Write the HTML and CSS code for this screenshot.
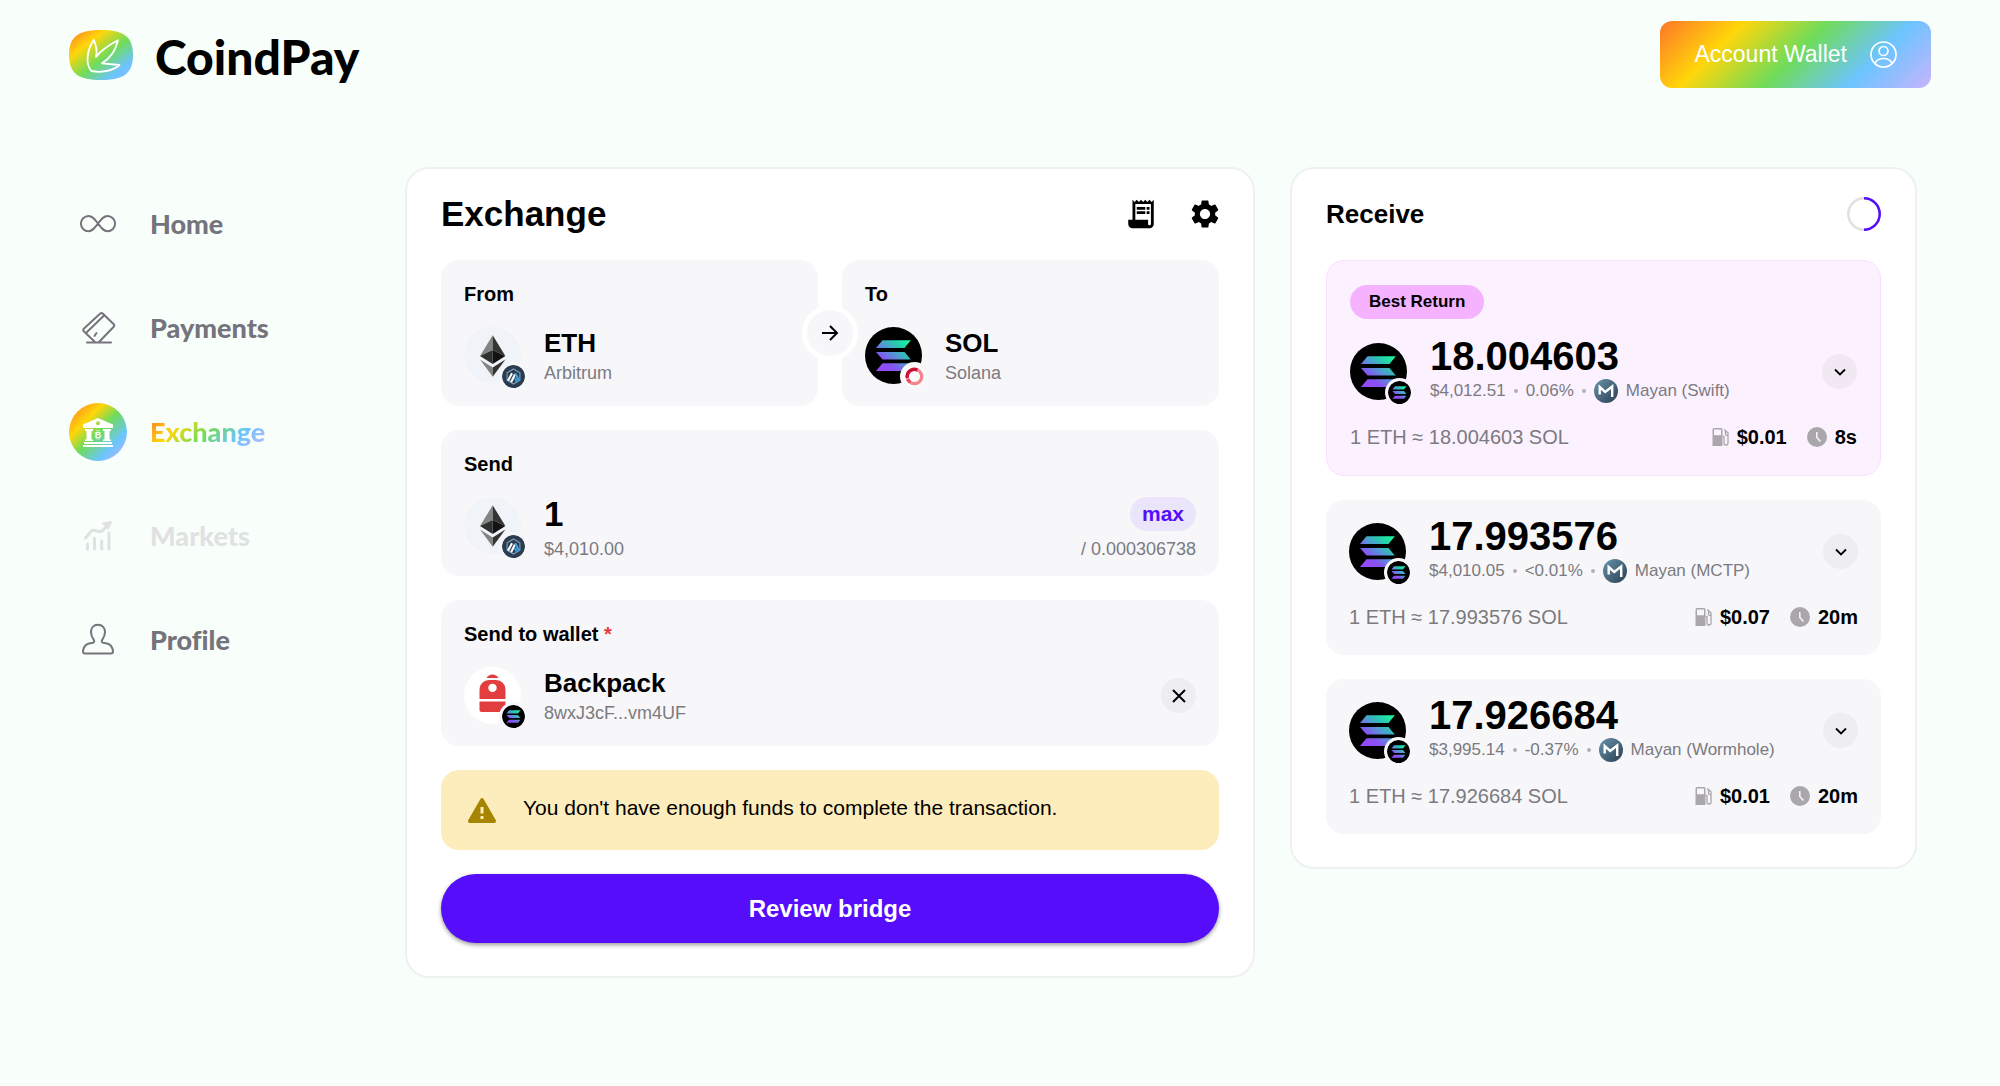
FILE: index.html
```html
<!DOCTYPE html>
<html lang="en">

<head>
	<meta charset="UTF-8">
	<title>CoindPay - Exchange</title>
	<link rel="stylesheet" href="styles.css">
</head>

<body>
	<!-- shared icons -->
	<svg class="sprite" aria-hidden="true">
		<defs>
			<linearGradient id="rainbow" x1="0" y1="0" x2="1" y2="1">
				<stop offset="0" stop-color="#ff7628" />
				<stop offset="0.28" stop-color="#ffd60a" />
				<stop offset="0.55" stop-color="#70dc5a" />
				<stop offset="0.8" stop-color="#6cc4ff" />
				<stop offset="1" stop-color="#8fb8ff" />
			</linearGradient>
			<linearGradient id="solGrad" gradientUnits="userSpaceOnUse" x1="14" y1="46" x2="42" y2="12">
				<stop offset="0" stop-color="#9945ff" />
				<stop offset="0.3" stop-color="#8752f3" />
				<stop offset="0.55" stop-color="#5497d5" />
				<stop offset="0.75" stop-color="#28c9b0" />
				<stop offset="1" stop-color="#19fb9b" />
			</linearGradient>
			<linearGradient id="mayanGrad" x1="0" y1="0" x2="1" y2="1">
				<stop offset="0" stop-color="#6795ad" />
				<stop offset="1" stop-color="#2c3d50" />
			</linearGradient>
		</defs>
		<symbol id="sol" viewBox="0 0 57 57">
			<circle cx="28.500" cy="28.500" r="28.500" fill="#000" />
			<path fill="url(#solGrad)" d="M11 21l6.500-7.700h28.300L39.500 21zM11 25h28.500l6.300 7.500H17.500zM11 44l6.500-7.700h28.300L39.500 44z" />
		</symbol>
		<symbol id="eth" viewBox="0 0 57 57">
			<circle cx="28.500" cy="28.500" r="28.500" fill="#f0f4f8" />
			<path fill="#828384" d="M28.700 8.300L16 29l12.700-6z" />
			<path fill="#343434" d="M28.700 8.300L41.400 29l-12.700-6z" />
			<path fill="#2f3030" d="M28.700 23L16 29l12.700 8z" />
			<path fill="#131313" d="M28.700 23l12.700 6-12.700 8z" />
			<path fill="#828384" d="M16 32.500l12.700 8v9.300z" />
			<path fill="#343434" d="M41.400 32.500l-12.700 8v9.300z" />
		</symbol>
		<symbol id="arb" viewBox="0 0 24 24">
			<circle cx="12" cy="12" r="12" fill="#2b3b50" />
			<path fill="none" stroke="#7d9db8" stroke-width="1.200" d="M12 4.200l6.700 3.900v7.800L12 19.800l-6.700-3.900V8.100z" />
			<path stroke="#fff" stroke-width="2.200" d="M6.300 16.500l4.200-8M9.500 18l4-8" />
			<path stroke="#3ba2e8" stroke-width="2.200" d="M13.800 8.500l3.800 7.500M13.500 13.500l2 4" />
		</symbol>
		<symbol id="mayan" viewBox="0 0 24 24">
			<circle cx="12" cy="12" r="12" fill="url(#mayanGrad)" />
			<path fill="none" stroke="#fff" stroke-width="2.400" d="M5.700 15.500V8l5.500 5 7-5.500V18" />
		</symbol>
		<symbol id="chevron" viewBox="0 0 12 8">
			<path fill="none" stroke="#000" stroke-width="1.800" d="M1 1.500l5 5 5-5" />
		</symbol>
		<symbol id="gas" viewBox="0 0 17 18">
			<path fill="#aaa7ac" fill-rule="evenodd" d="M2 0h7a1.500 1.500 0 0 1 1.500 1.500V18h-10V1.500A1.500 1.500 0 0 1 2 0zm0 1.500v5.700h7V1.500z" />
			<path fill="none" stroke="#aaa7ac" stroke-width="1.300" d="M10.500 8.500h1.500v6.500a2 2 0 0 0 4 0V4.800L12.300 1.500M13.500 3v3a1.500 1.500 0 0 0 2.500 1" />
		</symbol>
		<symbol id="clock" viewBox="0 0 20 20">
			<circle cx="10" cy="10" r="10" fill="#aaa7ac" />
			<path fill="none" stroke="#f7f7fa" stroke-width="1.500" d="M9.800 5v5.500l3.600 4" />
		</symbol>
	</svg>

	<header class="header">
		<a class="brand" href="#">
			<svg width="64" height="50" viewBox="0 0 64 50" aria-hidden="true">
				<path fill="url(#rainbow)" d="M32 0C54 0 64 6 64 25S54 50 32 50 0 44 0 25 10 0 32 0z" />
				<path fill="none" stroke="#fff" stroke-width="1.800" stroke-linejoin="round" d="M24.700 10C18 20 16 34 22.500 41c9.500 2 21.500 0 28-6L33 33.300C42 28 47 19 49 10.300 42 14 32 20 27 27c1.500-6 0-12-2.300-17z" />
			</svg>
			<span>CoindPay</span>
		</a>
		<button class="wallet-btn">
			Account Wallet
			<svg width="27" height="27" viewBox="0 0 27 27" fill="none" stroke="#fff" stroke-width="1.700" aria-hidden="true">
				<circle cx="13.500" cy="13.500" r="12.500" />
				<circle cx="13.500" cy="10" r="4.500" />
				<path d="M5 22.500c1.500-3.500 4.500-5 8.500-5s7 1.500 8.500 5" />
			</svg>
		</button>
	</header>

	<div class="layout">
		<nav class="nav">
			<a href="#">
				<svg viewBox="0 0 58 58" aria-hidden="true">
					<path d="M29 28.500C25 23 23 21 19.500 21a7.600 7.600 0 0 0 0 15.200C23 36.200 25 34 29 28.500S35 21 38.500 21a7.600 7.600 0 0 1 0 15.200C35 36.200 33 34 29 28.500z" />
				</svg>
				<span>Home</span>
			</a>
			<a href="#">
				<svg viewBox="0 0 58 58" aria-hidden="true">
					<path d="M18 43.500h24M26 43L15 32.500q-1.500-1.500 0-3L31 14.800q1.500-1.500 3 0L44.500 25q1.500 1.500 0 3L30 43M17.500 33.500L34.500 17M25.500 37l2-3" />
				</svg>
				<span>Payments</span>
			</a>
			<a href="#" class="active" aria-current="page">
				<svg viewBox="0 0 58 58" aria-hidden="true">
					<path fill="#fff" stroke="none" fill-rule="evenodd" d="M14 21.500L29 15l15 6.500V25H14zM29 18.300a2 2 0 1 0 0 4 2 2 0 0 0 0-4zM16 26h8v2h-1.500v8.500H24v1.500h-8v-1.500h1.500V28H16zM34 26h8v2h-1.500v8.500H42v1.500h-8v-1.500h1.500V28H34zM15 39h28v2H15zM14 42h30v2H14z" />
					<path stroke="#fff" stroke-width="1" d="M28 27.500v.5M30 27.500v.5M28 35.500v.5M30 35.500v.5" />
					<text x="29" y="35" text-anchor="middle" class="coin-letter">B</text>
				</svg>
				<span>Exchange</span>
			</a>
			<a href="#" class="disabled" aria-disabled="true">
				<svg viewBox="0 0 58 58" aria-hidden="true">
					<path class="thick" d="M16.500 31l5-6q2-2.500 4.500-1.500l4 1q2 .5 3.500-1L39 18M18.500 37v5M25.500 31v11M32.700 34v8M40 26v16" />
					<path fill="#e0e2e1" d="M34 16.500l8-1.500-3 6.500z" />
				</svg>
				<span>Markets</span>
			</a>
			<a href="#">
				<svg viewBox="0 0 58 58" aria-hidden="true">
					<path d="M29 13.700c-4.500 0-7 3.200-7 7.300 0 4 1.500 6 3 8.200.5 1 .3 2.300-1 2.600l-4 .6c-4 .9-5.500 4-6 7.600 0 1.600.7 2.500 2 2.500h26c1.300 0 2-.9 2-2.500-.5-3.600-2-6.700-6-7.600l-4-.6c-1.300-.3-1.500-1.600-1-2.600 1.500-2.200 3-4.200 3-8.200 0-4.100-2.500-7.300-7-7.300z" />
				</svg>
				<span>Profile</span>
			</a>
		</nav>

		<main class="cards">
			<section class="card">
				<div class="card-head">
					<h1>Exchange</h1>
					<div class="tools">
						<button class="icon-btn" aria-label="History">
							<svg width="34" height="34" viewBox="0 0 24 24" aria-hidden="true">
								<path d="M19.500 3.500L18 2l-1.500 1.500L15 2l-1.500 1.500L12 2l-1.500 1.500L9 2 7.500 3.500 6 2v14H3v3c0 1.660 1.340 3 3 3h12c1.660 0 3-1.340 3-3V2l-1.500 1.500zM19 19c0 .55-.45 1-1 1s-1-.45-1-1v-3H8V5h11v14z" />
								<path d="M9 7h6v2H9zM16 7h2v2h-2zM9 10h6v2H9zM16 10h2v2h-2z" />
							</svg>
						</button>
						<button class="icon-btn" aria-label="Settings">
							<svg width="34" height="34" viewBox="0 0 24 24" aria-hidden="true">
								<path d="M19.140 12.940c.04-.3.060-.61.060-.94 0-.32-.02-.64-.07-.94l2.030-1.580c.18-.14.23-.41.120-.61l-1.920-3.320c-.12-.22-.37-.29-.59-.22l-2.390.96c-.5-.38-1.030-.7-1.620-.94l-.36-2.540c-.04-.24-.24-.41-.48-.41h-3.840c-.24 0-.43.17-.47.41l-.36 2.540c-.59.24-1.130.57-1.620.94l-2.390-.96c-.22-.08-.47 0-.59.22L2.740 8.870c-.12.21-.08.47.120.61l2.030 1.580c-.05.3-.09.63-.09.94s.02.64.070.94l-2.030 1.580c-.18.14-.23.41-.12.61l1.920 3.320c.12.22.37.29.59.22l2.390-.96c.5.38 1.030.7 1.620.94l.36 2.540c.05.24.24.41.48.41h3.840c.24 0 .44-.17.47-.41l.36-2.540c.59-.24 1.130-.56 1.620-.94l2.390.96c.22.080.47 0 .59-.22l1.920-3.320c.12-.22.070-.47-.12-.61l-2.010-1.580zM12 15.600c-1.980 0-3.600-1.620-3.600-3.600s1.620-3.600 3.600-3.600 3.600 1.620 3.600 3.600-1.620 3.600-3.600 3.600z" />
							</svg>
						</button>
					</div>
				</div>

				<div class="pair">
					<button class="panel">
						<span class="label">From</span>
						<span class="row">
							<span class="token">
								<svg class="coin" aria-hidden="true"><use href="#eth" /></svg>
								<svg class="badge" aria-hidden="true"><use href="#arb" /></svg>
							</span>
							<span class="info">
								<span class="name">ETH</span>
								<span class="sub">Arbitrum</span>
							</span>
						</span>
					</button>
					<button class="panel">
						<span class="label">To</span>
						<span class="row">
							<span class="token">
								<svg class="coin" aria-hidden="true"><use href="#sol" /></svg>
								<svg class="badge" viewBox="0 0 24 24" aria-hidden="true">
									<circle cx="12" cy="12" r="12" fill="#fbfbfd" />
									<g fill="none" stroke-width="3.500">
										<circle cx="12" cy="12" r="7.500" stroke="#f4848e" />
										<path stroke="#cf1035" d="M4.500 13.500A7.500 7.500 0 0 1 15 5.200" />
										<path stroke="#e84a60" d="M5 15a7.500 7.500 0 0 0 2.500 3" />
									</g>
								</svg>
							</span>
							<span class="info">
								<span class="name">SOL</span>
								<span class="sub">Solana</span>
							</span>
						</span>
					</button>
					<button class="swap" aria-label="Swap tokens">
						<svg width="18" height="18" viewBox="0 0 18 18" fill="none" stroke="#000" stroke-width="2" aria-hidden="true">
							<path d="M1 9h15M9 2l7 7-7 7" />
						</svg>
					</button>
				</div>

				<div class="panel">
					<label class="label" for="amount">Send</label>
					<div class="row top">
						<span class="token">
							<svg class="coin" aria-hidden="true"><use href="#eth" /></svg>
							<svg class="badge" aria-hidden="true"><use href="#arb" /></svg>
						</span>
						<div class="info send">
							<input type="text" id="amount" class="amount" value="1">
							<span class="sub">$4,010.00</span>
						</div>
						<div class="info send right">
							<button class="max">max</button>
							<span class="sub">/ 0.000306738</span>
						</div>
					</div>
				</div>

				<div class="panel">
					<span class="label">Send to wallet <span class="required">*</span></span>
					<div class="row">
						<span class="token">
							<svg class="coin" viewBox="0 0 57 57" fill="#e33e3f" aria-hidden="true">
								<circle cx="28.500" cy="28.500" r="28.500" fill="#fff" />
								<path d="M22.500 11q2-3.500 6-3.500t6 3.500z" />
								<path fill-rule="evenodd" d="M15.500 32V22.500a9.500 9.500 0 0 1 9.500-9.500h7a9.500 9.500 0 0 1 9.500 9.500V32zM28.500 16.700a4.200 4.200 0 1 0 0 8.400 4.200 4.200 0 0 0 0-8.400z" />
								<path d="M15.500 34.500h26v8.500a2 2 0 0 1-2 2h-22a2 2 0 0 1-2-2z" />
							</svg>
							<svg class="badge" aria-hidden="true"><use href="#sol" /></svg>
						</span>
						<div class="info">
							<span class="name">Backpack</span>
							<span class="sub">8wxJ3cF...vm4UF</span>
						</div>
						<button class="round" aria-label="Remove wallet">
							<svg width="14" height="14" viewBox="0 0 14 14" stroke="#000" stroke-width="2" aria-hidden="true">
								<path d="M1 1l12 12M13 1L1 13" />
							</svg>
						</button>
					</div>
				</div>

				<div class="warning" role="alert">
					<svg width="28" height="25" viewBox="0 0 28 25" aria-hidden="true">
						<path fill="#a68500" fill-rule="evenodd" d="M12.300 1.200q1.700-2.400 3.400 0l12 20.800q1 3-1.700 3H2q-2.700 0-1.700-3zM12.500 9v6.500h3V9zM12.500 18v3h3v-3z" />
					</svg>
					<span>You don't have enough funds to complete the transaction.</span>
				</div>

				<button class="review">Review bridge</button>
			</section>

			<section class="card">
				<div class="card-head">
					<h2>Receive</h2>
					<svg width="34" height="34" viewBox="0 0 34 34" fill="none" stroke-width="2.500" aria-hidden="true">
						<circle cx="17" cy="17" r="15.700" stroke="#e0e0e1" />
						<path stroke="#560dfa" d="M17 1.300a15.700 15.700 0 0 1 0 31.400" />
					</svg>
				</div>

				<div class="quote best">
					<span class="pill">Best Return</span>
					<div class="row">
						<span class="token">
							<svg class="coin" aria-hidden="true"><use href="#sol" /></svg>
							<svg class="badge" aria-hidden="true"><use href="#sol" /></svg>
						</span>
						<div class="info">
							<span class="total">18.004603</span>
							<span class="sub via">$4,012.51<i class="dot"></i>0.06%<i class="dot"></i><svg class="mayan" aria-hidden="true"><use href="#mayan" /></svg>Mayan (Swift)</span>
						</div>
						<button class="round" aria-label="Show details">
							<svg width="12" height="8" aria-hidden="true"><use href="#chevron" /></svg>
						</button>
					</div>
					<div class="rate">
						<span>1 ETH ≈ 18.004603 SOL</span>
						<b><svg width="17" height="18" aria-hidden="true"><use href="#gas" /></svg>$0.01</b>
						<b><svg width="20" height="20" aria-hidden="true"><use href="#clock" /></svg>8s</b>
					</div>
				</div>

				<div class="quote">
					<div class="row">
						<span class="token">
							<svg class="coin" aria-hidden="true"><use href="#sol" /></svg>
							<svg class="badge" aria-hidden="true"><use href="#sol" /></svg>
						</span>
						<div class="info">
							<span class="total">17.993576</span>
							<span class="sub via">$4,010.05<i class="dot"></i>&lt;0.01%<i class="dot"></i><svg class="mayan" aria-hidden="true"><use href="#mayan" /></svg>Mayan (MCTP)</span>
						</div>
						<button class="round" aria-label="Show details">
							<svg width="12" height="8" aria-hidden="true"><use href="#chevron" /></svg>
						</button>
					</div>
					<div class="rate">
						<span>1 ETH ≈ 17.993576 SOL</span>
						<b><svg width="17" height="18" aria-hidden="true"><use href="#gas" /></svg>$0.07</b>
						<b><svg width="20" height="20" aria-hidden="true"><use href="#clock" /></svg>20m</b>
					</div>
				</div>

				<div class="quote">
					<div class="row">
						<span class="token">
							<svg class="coin" aria-hidden="true"><use href="#sol" /></svg>
							<svg class="badge" aria-hidden="true"><use href="#sol" /></svg>
						</span>
						<div class="info">
							<span class="total">17.926684</span>
							<span class="sub via">$3,995.14<i class="dot"></i>-0.37%<i class="dot"></i><svg class="mayan" aria-hidden="true"><use href="#mayan" /></svg>Mayan (Wormhole)</span>
						</div>
						<button class="round" aria-label="Show details">
							<svg width="12" height="8" aria-hidden="true"><use href="#chevron" /></svg>
						</button>
					</div>
					<div class="rate">
						<span>1 ETH ≈ 17.926684 SOL</span>
						<b><svg width="17" height="18" aria-hidden="true"><use href="#gas" /></svg>$0.01</b>
						<b><svg width="20" height="20" aria-hidden="true"><use href="#clock" /></svg>20m</b>
					</div>
				</div>
			</section>
		</main>
	</div>
</body>

</html>
```
FILE: styles.css
```css
* {
	box-sizing: border-box;
}

body {
	margin: 0;
	font-family: "Liberation Sans", Arial, sans-serif;
	font-size: 20px;
	color: #000;
	background-color: #f8fffb;
}

button {
	font-family: inherit;
	color: inherit;
	border: none;
	padding: 0;
	cursor: pointer;
}

a {
	color: inherit;
	text-decoration: none;
}

svg {
	display: block;
	flex-shrink: 0;
}

.sprite {
	position: absolute;
	width: 0;
	height: 0;
}

/* header */
.header {
	display: flex;
	justify-content: space-between;
	padding: 21px 69px 0;
}

.brand {
	display: flex;
	align-items: center;
	gap: 22px;
	height: 67px;
	font-family: Lato, sans-serif;
	font-weight: 900;
	font-size: 48px;
}

.brand span {
	padding-top: 4px;
}

.wallet-btn {
	display: flex;
	align-items: center;
	gap: 23px;
	height: 67px;
	padding: 0 34px;
	border-radius: 12px;
	font-size: 23px;
	color: #fff;
	background: linear-gradient(135deg, #ff7628, #ffd60a 25%, #70dc5a 50%, #6cc4ff 75%, #c8b4fb);
}

/* side menu */
.layout {
	display: flex;
	padding: 79px 83px 80px 69px;
}

.nav {
	display: flex;
	flex-direction: column;
	flex-shrink: 0;
	gap: 46px;
	width: 336px;
	padding-top: 28px;
	font-family: Lato, sans-serif;
	font-weight: 900;
	font-size: 27px;
	font-variant-ligatures: none;
	line-height: 32px;
	color: #75737c;
}

.nav a {
	display: flex;
	align-items: center;
	gap: 23px;
}

.nav svg {
	width: 58px;
	height: 58px;
	fill: none;
	stroke: #75737c;
	stroke-width: 2;
	stroke-linecap: round;
	stroke-linejoin: round;
}

.nav .active svg {
	border-radius: 50%;
	background: linear-gradient(135deg, #ff7628, #ffd60a 30%, #70dc5a 50%, #6cc4ff 75%, #c8b4fb);
}

.nav .active span {
	color: transparent;
	background: linear-gradient(135deg, #ff7628, #ffd60a 25%, #70dc5a 50%, #6cc4ff 75%, #c8b4fb);
	-webkit-background-clip: text;
	background-clip: text;
}

.coin-letter {
	font-family: "Liberation Sans", Arial, sans-serif;
	font-size: 9px;
	font-weight: bold;
	fill: #fff;
	stroke: none;
}

.nav .disabled {
	color: #e0e2e1;
}

.nav .disabled svg {
	stroke: #e0e2e1;
}

.nav .thick {
	stroke-width: 3;
}

/* cards */
.cards {
	display: grid;
	grid-template-columns: 850fr 627fr;
	align-items: start;
	gap: 35px;
	flex: 1;
}

.card {
	display: flex;
	flex-direction: column;
	gap: 24px;
	padding: 28px 34px 33px;
	border: 2px solid #eff1f0;
	border-radius: 24px;
	background-color: #fff;
}

.card-head {
	display: flex;
	align-items: center;
	justify-content: space-between;
	height: 34px;
	margin-bottom: 5px;
}

h1,
h2 {
	margin: 0;
	font-size: 35px;
}

h2 {
	font-size: 26px;
}

.tools {
	display: flex;
	gap: 30px;
	margin-right: -3px;
}

.icon-btn {
	background: none;
}

.pair {
	position: relative;
	display: grid;
	grid-template-columns: 1fr 1fr;
	gap: 24px;
}

.panel {
	display: flex;
	flex-direction: column;
	gap: 21px;
	min-height: 146px;
	padding: 22px 23px 0;
	border-radius: 18px;
	text-align: left;
	background-color: #f7f7fa;
}

.label {
	font-size: 20px;
	font-weight: bold;
	line-height: 24px;
}

.required {
	color: #e5393f;
}

.swap {
	position: absolute;
	top: 50%;
	left: 50%;
	display: flex;
	align-items: center;
	justify-content: center;
	width: 56px;
	height: 56px;
	border: 5px solid #fff;
	border-radius: 50%;
	background-color: #f7f7fa;
	transform: translate(-50%, -50%);
}

.row {
	display: flex;
	align-items: center;
	gap: 23px;
}

.row.top {
	align-items: flex-start;
}

.token {
	position: relative;
	flex-shrink: 0;
	width: 57px;
	height: 57px;
}

.coin {
	width: 57px;
	height: 57px;
}

.badge {
	position: absolute;
	right: -7px;
	bottom: -7px;
	width: 29px;
	height: 29px;
	border: 3px solid #f7f7fa;
	border-radius: 50%;
	background-color: #f7f7fa;
}

.info {
	display: flex;
	flex-direction: column;
	gap: 5px;
	flex: 1;
}

.name {
	font-size: 26px;
	font-weight: bold;
	line-height: 30px;
}

.sub {
	font-size: 18px;
	line-height: 20px;
	color: #7b7a7f;
}

.send {
	gap: 8px;
}

.right {
	align-items: flex-end;
}

.amount {
	width: 100%;
	height: 34px;
	padding: 0;
	border: none;
	outline: none;
	background: none;
	font-family: inherit;
	font-size: 35px;
	font-weight: bold;
}

.max {
	height: 34px;
	padding: 0 12px;
	border-radius: 17px;
	font-size: 21px;
	font-weight: bold;
	color: #560dfa;
	background-color: #eae5fb;
}

.round {
	display: flex;
	align-items: center;
	justify-content: center;
	flex-shrink: 0;
	width: 35px;
	height: 35px;
	border-radius: 50%;
	background-color: #eeeef0;
}

.warning {
	display: flex;
	align-items: center;
	gap: 27px;
	height: 80px;
	padding: 0 27px;
	border-radius: 18px;
	font-size: 21px;
	background-color: #fdecbc;
}

.warning span {
	padding-bottom: 4px;
}

.review {
	height: 69px;
	border-radius: 35px;
	font-size: 24px;
	font-weight: bold;
	color: #fff;
	background-color: #560dfa;
	box-shadow: 0 2px 4px rgba(0, 0, 0, 0.4);
}

/* quotes */
.quote {
	padding: 20px 23px 26px;
	border-radius: 18px;
	background-color: #f7f7fa;
}

.best {
	padding: 24px 23px 26px;
	border: 1px solid #f8e0fe;
	background-color: #fcf1ff;
}

.best .badge {
	border-color: #fcf1ff;
	background-color: #fcf1ff;
}

.best .round {
	background-color: #f2e8f4;
}

.pill {
	display: inline-block;
	margin-bottom: 21px;
	padding: 0 19px;
	border-radius: 17px;
	font-size: 17px;
	font-weight: bold;
	line-height: 34px;
	vertical-align: top;
	background-color: #f5b3ff;
}

.quote .info {
	gap: 9px;
	padding-top: 2px;
}

.total {
	font-size: 40px;
	font-weight: bold;
	line-height: 28px;
}

.via {
	display: flex;
	align-items: center;
	font-size: 17px;
	line-height: 24px;
}

.dot {
	width: 4px;
	height: 4px;
	margin: 0 8px;
	border-radius: 50%;
	background-color: #b3aeb5;
}

.mayan {
	width: 24px;
	height: 24px;
	margin-right: 8px;
}

.rate {
	display: flex;
	align-items: center;
	margin-top: 22px;
	line-height: 24px;
	color: #7b7a7f;
}

.rate span {
	flex: 1;
}

.rate b {
	display: flex;
	align-items: center;
	gap: 8px;
	margin-left: 20px;
	color: #000;
}
```
